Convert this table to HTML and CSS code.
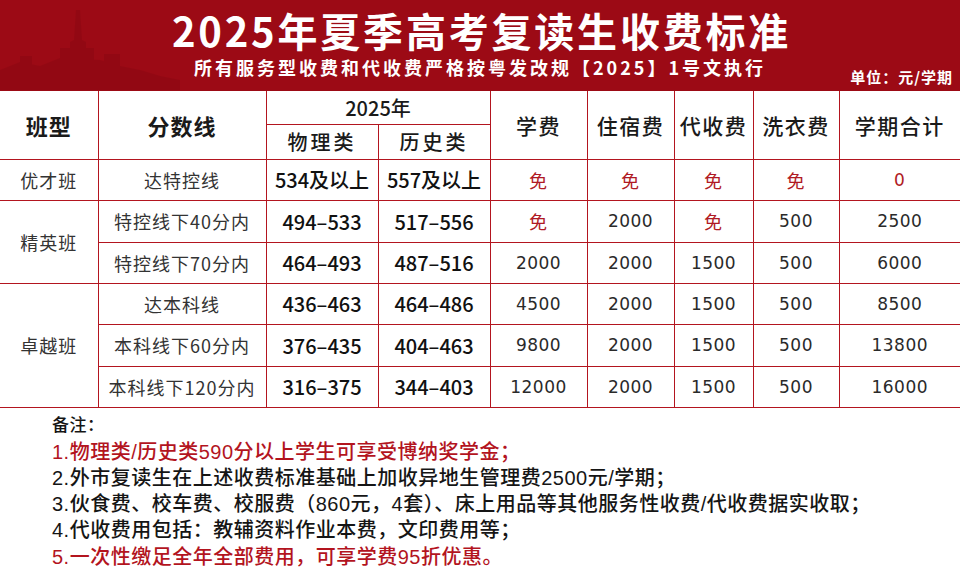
FILE: index.html
```html
<!DOCTYPE html>
<html lang="zh-CN">
<head>
<meta charset="utf-8">
<title>2025年夏季高考复读生收费标准</title>
<link rel="stylesheet" href="styles.css">
</head>
<body>
<header class="banner">
  <svg class="skyline" width="180" height="90" viewBox="0 0 180 90" aria-hidden="true">
    <g fill="#7e0610" opacity="0.3">
      <polygon points="76,10 80,10 82,40 86,42 86,90 70,90 70,42 74,40"/>
      <rect x="60" y="48" width="34" height="42"/>
      <polygon points="0,70 20,62 40,66 60,58 100,60 120,66 140,70 160,76 180,80 180,90 0,90"/>
      <rect x="20" y="56" width="12" height="34"/>
      <rect x="104" y="54" width="16" height="36"/>
    </g>
  </svg>
  <h1 class="title">2025年夏季高考复读生收费标准</h1>
  <div class="sub-row">
    <span></span>
    <p class="subtitle">所有服务型收费和代收费严格按粤发改规【2025】1号文执行</p>
    <span class="unit">单位：元/学期</span>
  </div>
</header>

<table class="fees">
  <colgroup>
    <col class="c1"><col class="c2"><col class="c3"><col class="c4"><col class="c5"><col class="c6"><col class="c7"><col class="c8"><col class="c9">
  </colgroup>
  <thead>
    <tr class="h1">
      <th rowspan="2" class="strong">班型</th>
      <th rowspan="2" class="strong">分数线</th>
      <th colspan="2" class="year">2025年</th>
      <th rowspan="2">学费</th>
      <th rowspan="2">住宿费</th>
      <th rowspan="2">代收费</th>
      <th rowspan="2">洗衣费</th>
      <th rowspan="2">学期合计</th>
    </tr>
    <tr class="h2">
      <th>物理类</th>
      <th>历史类</th>
    </tr>
  </thead>
  <tbody>
    <tr class="r41">
      <td class="cls">优才班</td>
      <td class="line">达特控线</td>
      <td class="score">534及以上</td>
      <td class="score">557及以上</td>
      <td class="free">免</td>
      <td class="free">免</td>
      <td class="free">免</td>
      <td class="free">免</td>
      <td class="num red">0</td>
    </tr>
    <tr class="r42">
      <td class="cls" rowspan="2">精英班</td>
      <td class="line">特控线下40分内</td>
      <td class="score">494–533</td>
      <td class="score">517–556</td>
      <td class="free">免</td>
      <td class="num">2000</td>
      <td class="free">免</td>
      <td class="num">500</td>
      <td class="num">2500</td>
    </tr>
    <tr class="r41">
      <td class="line">特控线下70分内</td>
      <td class="score">464–493</td>
      <td class="score">487–516</td>
      <td class="num">2000</td>
      <td class="num">2000</td>
      <td class="num">1500</td>
      <td class="num">500</td>
      <td class="num">6000</td>
    </tr>
    <tr class="r41">
      <td class="cls" rowspan="3">卓越班</td>
      <td class="line">达本科线</td>
      <td class="score">436–463</td>
      <td class="score">464–486</td>
      <td class="num">4500</td>
      <td class="num">2000</td>
      <td class="num">1500</td>
      <td class="num">500</td>
      <td class="num">8500</td>
    </tr>
    <tr class="r42">
      <td class="line">本科线下60分内</td>
      <td class="score">376–435</td>
      <td class="score">404–463</td>
      <td class="num">9800</td>
      <td class="num">2000</td>
      <td class="num">1500</td>
      <td class="num">500</td>
      <td class="num">13800</td>
    </tr>
    <tr class="r41">
      <td class="line">本科线下120分内</td>
      <td class="score">316–375</td>
      <td class="score">344–403</td>
      <td class="num">12000</td>
      <td class="num">2000</td>
      <td class="num">1500</td>
      <td class="num">500</td>
      <td class="num">16000</td>
    </tr>
  </tbody>
</table>

<section class="notes">
  <p class="note-head">备注：</p>
  <p class="red-note">1.物理类/历史类590分以上学生可享受博纳奖学金；</p>
  <p>2.外市复读生在上述收费标准基础上加收异地生管理费2500元/学期；</p>
  <p>3.伙食费、校车费、校服费（860元，4套）、床上用品等其他服务性收费/代收费据实收取；</p>
  <p>4.代收费用包括：教辅资料作业本费，文印费用等；</p>
  <p class="red-note">5.一次性缴足全年全部费用，可享学费95折优惠。</p>
</section>
</body>
</html>
```
FILE: styles.css
```css
* { box-sizing: border-box; }
html, body { margin: 0; padding: 0; background: #fff; }
body {
  width: 960px;
  height: 578px;
  overflow: hidden;
  font-family: "Noto Sans CJK SC", "Noto Sans", sans-serif;
  color: #222;
}

.banner {
  position: relative;
  height: 91px;
  background: #9c0a15;
  color: #fff;
  padding-top: 8px;
  overflow: hidden;
}
.skyline {
  position: absolute;
  left: 0;
  top: 0;
}
.title {
  position: relative;
  margin: 0;
  text-align: center;
  font-size: 40px;
  line-height: 44px;
  font-weight: 700;
  letter-spacing: 2.8px;
  padding-left: 3px;
}
.sub-row {
  position: relative;
  display: grid;
  grid-template-columns: 1fr auto 1fr;
  align-items: end;
  margin-top: 2px;
}
.subtitle {
  margin: 0;
  font-size: 18px;
  line-height: 26px;
  font-weight: 700;
  letter-spacing: 3px;
}
.unit {
  justify-self: end;
  font-size: 15px;
  font-weight: 700;
  line-height: 18px;
  letter-spacing: 1px;
  padding-right: 7px;
  margin-bottom: -6px;
}

.fees {
  width: 960px;
  table-layout: fixed;
  border-collapse: collapse;
  border-top: hidden;
  border-left: hidden;
  border-right: hidden;
}
.c1 { width: 98px; }
.c2 { width: 168px; }
.c3 { width: 112px; }
.c4 { width: 112px; }
.c5 { width: 97px; }
.c6 { width: 87px; }
.c7 { width: 79px; }
.c8 { width: 86px; }
.c9 { width: 121px; }

.fees th, .fees td {
  border: 1.5px solid #b3151f;
  padding: 0;
  text-align: center;
  vertical-align: middle;
  white-space: nowrap;
}
.fees th {
  font-size: 21px;
  font-weight: 500;
  color: #1a1a1a;
  letter-spacing: 1.5px;
}
.fees th.strong {
  font-size: 22px;
  font-weight: 700;
  letter-spacing: 1px;
}
.fees th.year {
  font-size: 20px;
  letter-spacing: 0;
}
.h1 { height: 33px; }
.h2 { height: 35px; }
.h2 th { font-size: 20px; letter-spacing: 3px; }
.r41 { height: 41px; }
.r42 { height: 42px; }

.fees td {
  font-size: 18px;
  color: #333;
  letter-spacing: 1px;
}
.fees td.score {
  font-size: 20px;
  font-weight: 500;
  color: #111;
  letter-spacing: 0;
}
.fees td.num {
  font-family: "DejaVu Sans", "Noto Sans CJK SC", sans-serif;
  font-size: 17px;
  letter-spacing: 0.5px;
  color: #2a2a2a;
}
.fees td.free, .fees td.red {
  color: #b01a24;
}

.notes {
  padding: 5px 0 0 52px;
  font-family: "Liberation Sans", "Noto Sans CJK SC", sans-serif;
}
.notes p {
  margin: 0;
  font-size: 20px;
  line-height: 26.3px;
  letter-spacing: 0.5px;
  font-weight: 500;
  color: #151515;
}
.notes .note-head {
  font-size: 17px;
  line-height: 26px;
}
.notes .red-note {
  color: #b3141e;
}
```
